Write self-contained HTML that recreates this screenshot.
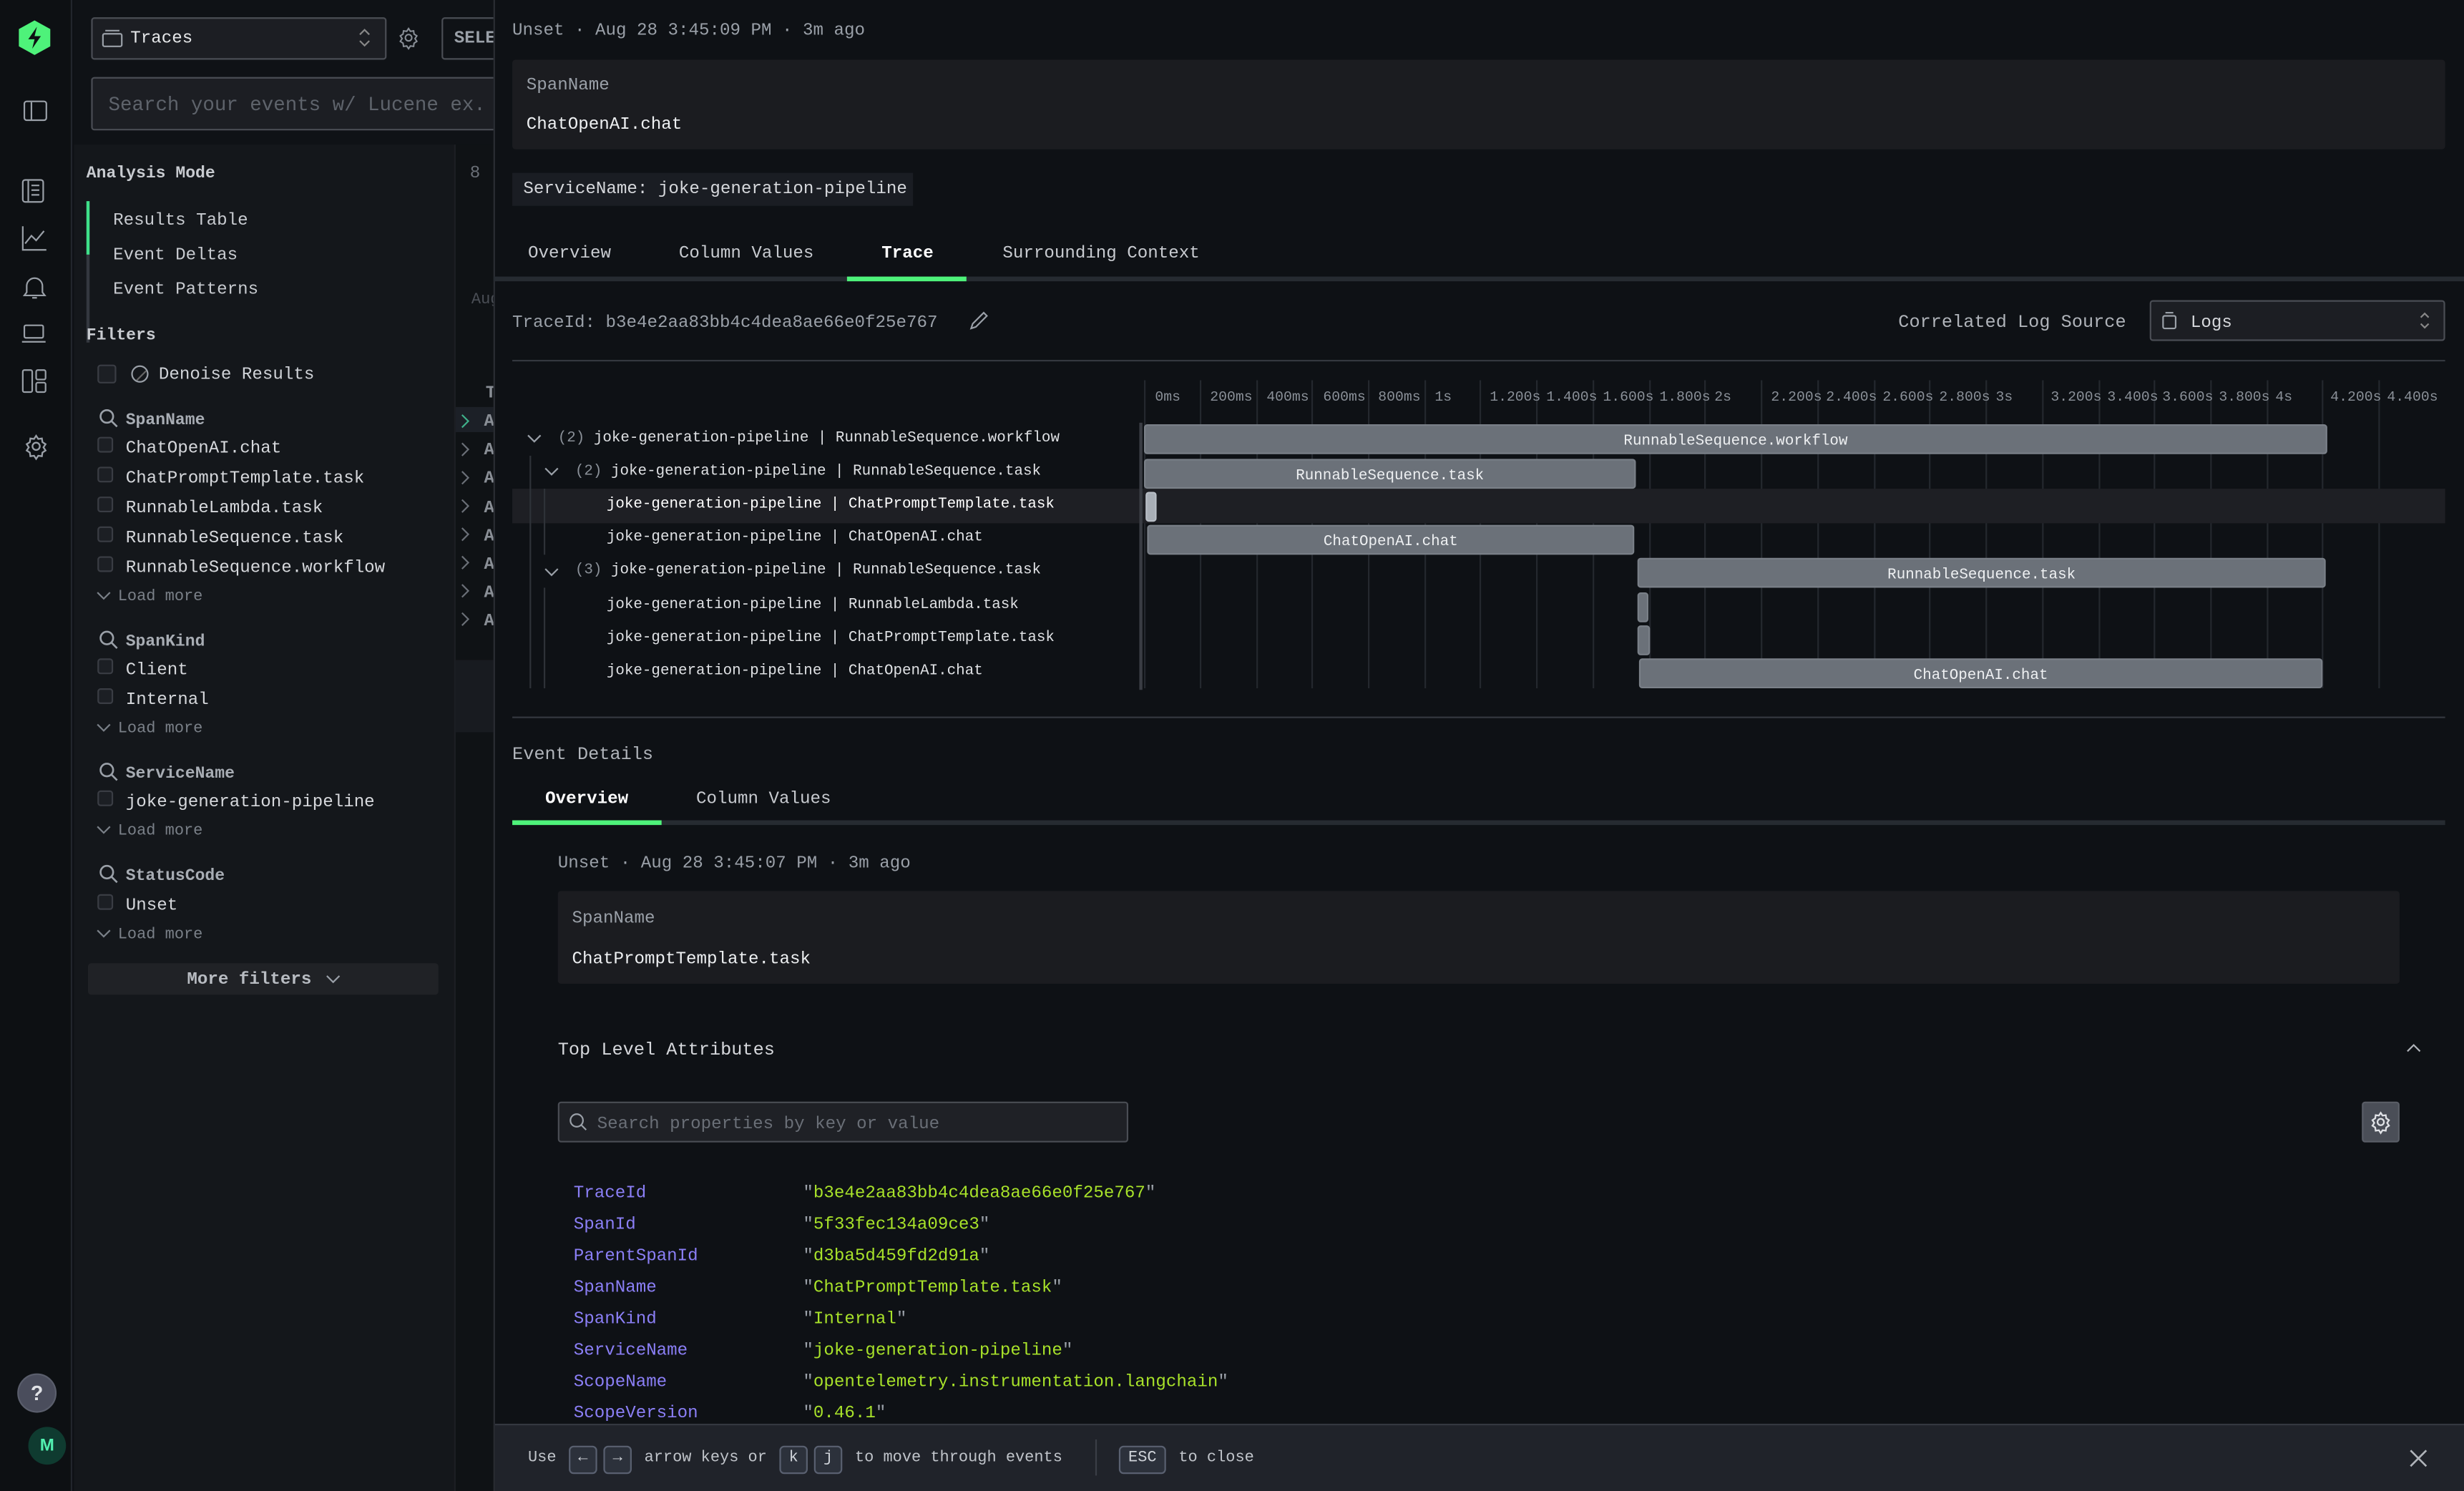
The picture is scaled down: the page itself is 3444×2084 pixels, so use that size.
<!DOCTYPE html>
<html><head><meta charset="utf-8">
<style>
*{margin:0;padding:0;box-sizing:border-box}
html,body{width:3444px;height:2083px;overflow:hidden;background:#0e1115}
#s{position:absolute;left:0;top:0;width:1568px;height:949px;transform:scale(2.19643);transform-origin:0 0;font-family:"Liberation Mono",monospace;color:#d6d8dc;background:#0e1115}
.a{position:absolute;white-space:nowrap;line-height:16px;margin-top:2px}
.t{font-size:11px}
.g{color:#9aa0a8}
.b{font-weight:bold}
svg{position:absolute;overflow:visible}
.cb{position:absolute;width:10px;height:10px;border:1px solid #3a3d44;background:#1c1f24;border-radius:2px}
.bar{position:absolute;height:19px;background:#6b7179;border-radius:2px;color:#eef0f2;font-size:9.5px;text-align:center;line-height:19px;border:1px solid #7a8088}
.tr{font-size:9.5px;color:#dfe1e4;margin-top:1px}
.tk{font-size:9px;color:#8a9098}
.k{color:#8b7ff6}
.v{color:#a8e22a}
.kbd{display:inline-block;border:1px solid #596070;background:#2c313b;border-radius:3px;padding:0 3px;height:18px;line-height:16px;min-width:18px;text-align:center;margin:0 2px;color:#d0d4da}
</style></head><body><div id="s">

<!-- nav -->
<div style="position:absolute;left:0;top:0;width:46px;height:949px;background:#0d1013;border-right:1px solid #22262c"></div>
<svg width="24" height="24" style="left:10px;top:12px" viewBox="0 0 24 24"><polygon points="12,1 22,6.5 22,17.5 12,23 2,17.5 2,6.5" fill="#4ef27a"/><path d="M13.5 5 L8 13 H12 L10.5 19 L16 11 H12 Z" fill="#0d1013"/></svg>
<svg width="16" height="14" style="left:15px;top:64px"><rect x="0.5" y="0.5" width="14" height="12" rx="1.5" fill="none" stroke="#9aa0a8"/><line x1="5" y1="1" x2="5" y2="12" stroke="#9aa0a8"/></svg>
<svg width="16" height="16" style="left:14px;top:114px"><rect x="0.5" y="0.5" width="13" height="14" rx="1.5" fill="none" stroke="#9aa0a8"/><line x1="4" y1="1" x2="4" y2="14" stroke="#9aa0a8"/><path d="M6 4h5M6 7h5M6 10h5" stroke="#9aa0a8"/></svg>
<svg width="16" height="16" style="left:14px;top:144px"><path d="M0.5 0v15h15M2 11l4-5 3 3 5-6" fill="none" stroke="#9aa0a8"/></svg>
<svg width="16" height="16" style="left:14px;top:175px"><path d="M3 11V7a5 5 0 0 1 10 0v4l1.5 2h-13z M6.5 14.5h3" fill="none" stroke="#9aa0a8"/></svg>
<svg width="16" height="14" style="left:14px;top:206px"><rect x="1.5" y="1" width="12" height="8" rx="1" fill="none" stroke="#9aa0a8"/><path d="M0 11.5h15" stroke="#9aa0a8"/></svg>
<svg width="16" height="16" style="left:14px;top:235px"><rect x="0.5" y="0.5" width="6" height="14" rx="1" fill="none" stroke="#9aa0a8"/><rect x="9" y="0.5" width="6" height="6" rx="1" fill="none" stroke="#9aa0a8"/><rect x="9" y="8.5" width="6" height="6" rx="1" fill="none" stroke="#9aa0a8"/></svg>
<svg width="16" height="16" style="left:15px;top:276px" viewBox="0 0 24 24"><path d="M12 2l2 3 3.5-.5.5 3.5 3 2-2 3 2 3-3 2-.5 3.5-3.5-.5-2 3-2-3-3.5.5-.5-3.5-3-2 2-3-2-3 3-2 .5-3.5 3.5.5z" fill="none" stroke="#9aa0a8" stroke-width="1.6"/><circle cx="12" cy="12" r="3.5" fill="none" stroke="#9aa0a8" stroke-width="1.6"/></svg>
<div style="position:absolute;left:11px;top:874px;width:25px;height:25px;border-radius:50%;background:#4a4d5c;border:1px solid #5a5e6c;color:#e0e2e6;font:bold 13px 'Liberation Sans',sans-serif;text-align:center;line-height:23px">?</div>
<div style="position:absolute;left:18px;top:908px;width:24px;height:24px;border-radius:50%;background:#0f3b30;color:#52f0b0;font:bold 11px 'Liberation Sans',sans-serif;text-align:center;line-height:24px">M</div>

<!-- sidebar -->
<div style="position:absolute;left:47px;top:0;width:267px;height:92px;background:#0f1216"></div>
<div style="position:absolute;left:47px;top:92px;width:243px;height:857px;background:#14171b;border-right:1px solid #1c1f24"></div>
<div style="position:absolute;left:290px;top:92px;width:24px;height:857px;background:#0f1215"></div>
<div style="position:absolute;left:58px;top:11px;width:188px;height:27px;border:1px solid #4a4d54;border-radius:2px;background:#1c1e23"></div>
<svg width="14" height="12" style="left:65px;top:18px"><rect x="0.5" y="3.5" width="12" height="8" rx="1" fill="none" stroke="#9aa0a8"/><path d="M2 1.5h9" stroke="#9aa0a8"/></svg>
<div class="a t" style="left:83px;top:15px;color:#e6e8ea">Traces</div>
<svg width="10" height="12" style="left:227px;top:18px"><path d="M2 4l3-3 3 3M2 8l3 3 3-3" fill="none" stroke="#888"/></svg>
<svg width="14" height="14" style="left:253px;top:17px" viewBox="0 0 24 24"><path d="M12 2l2 3 3.5-.5.5 3.5 3 2-2 3 2 3-3 2-.5 3.5-3.5-.5-2 3-2-3-3.5.5-.5-3.5-3-2 2-3-2-3 3-2 .5-3.5 3.5.5z" fill="none" stroke="#8a9098" stroke-width="1.6"/><circle cx="12" cy="12" r="3.5" fill="none" stroke="#8a9098" stroke-width="1.6"/></svg>
<div style="position:absolute;left:281px;top:11px;width:40px;height:27px;border:1px solid #4a4d54;border-radius:2px"></div>
<div class="a t b" style="left:289px;top:15px;color:#9aa0a8">SELE</div>
<div style="position:absolute;left:58px;top:49px;width:260px;height:34px;border:1px solid #4a4d54;border-radius:2px;background:#1c1e23"></div>
<div class="a" style="left:69px;top:57px;font-size:12.5px;color:#5e636b">Search your events w/ Lucene ex. co</div>

<div class="a t b" style="left:55px;top:101px;font-size:10.5px;color:#c8cbd0">Analysis Mode</div>
<div style="position:absolute;left:55px;top:128px;width:2px;height:90px;background:#34383f"></div>
<div style="position:absolute;left:55px;top:128px;width:2px;height:34px;background:#3ee08a"></div>
<div class="a t" style="left:72px;top:131px;color:#c8cbd0">Results Table</div>
<div class="a t" style="left:72px;top:153px;color:#c8cbd0">Event Deltas</div>
<div class="a t" style="left:72px;top:175px;color:#c8cbd0">Event Patterns</div>
<div class="a t b" style="left:55px;top:204px;font-size:10.5px;color:#c8cbd0">Filters</div>
<div class="cb" style="left:62px;top:232px;width:12px;height:12px"></div>
<svg width="12" height="12" style="left:83px;top:232px"><circle cx="6" cy="6" r="5" fill="none" stroke="#9aa0a8"/><path d="M4 10l6-6" stroke="#666"/></svg>
<div class="a t" style="left:101px;top:229px;color:#d0d3d8">Denoise Results</div>

<svg width="12" height="12" style="left:63px;top:260px"><circle cx="5" cy="5" r="4" fill="none" stroke="#9aa0a8" stroke-width="1.2"/><path d="M8 8l3.5 3.5" stroke="#9aa0a8" stroke-width="1.2"/></svg>
<div class="a b" style="left:80px;top:258px;font-size:10.5px;color:#a8adb4">SpanName</div>
<div class="cb" style="left:62px;top:278px"></div><div class="a t" style="left:80px;top:276px">ChatOpenAI.chat</div>
<div class="cb" style="left:62px;top:297px"></div><div class="a t" style="left:80px;top:295px">ChatPromptTemplate.task</div>
<div class="cb" style="left:62px;top:316px"></div><div class="a t" style="left:80px;top:314px">RunnableLambda.task</div>
<div class="cb" style="left:62px;top:335px"></div><div class="a t" style="left:80px;top:333px">RunnableSequence.task</div>
<div class="cb" style="left:62px;top:354px"></div><div class="a t" style="left:80px;top:352px">RunnableSequence.workflow</div>
<svg width="10" height="6" style="left:61px;top:376px"><path d="M1 1l4 4 4-4" fill="none" stroke="#7a8088"/></svg><div class="a" style="left:75px;top:371px;font-size:10px;color:#7a8088">Load more</div>

<svg width="12" height="12" style="left:63px;top:401px"><circle cx="5" cy="5" r="4" fill="none" stroke="#9aa0a8" stroke-width="1.2"/><path d="M8 8l3.5 3.5" stroke="#9aa0a8" stroke-width="1.2"/></svg>
<div class="a b" style="left:80px;top:399px;font-size:10.5px;color:#a8adb4">SpanKind</div>
<div class="cb" style="left:62px;top:419px"></div><div class="a t" style="left:80px;top:417px">Client</div>
<div class="cb" style="left:62px;top:438px"></div><div class="a t" style="left:80px;top:436px">Internal</div>
<svg width="10" height="6" style="left:61px;top:460px"><path d="M1 1l4 4 4-4" fill="none" stroke="#7a8088"/></svg><div class="a" style="left:75px;top:455px;font-size:10px;color:#7a8088">Load more</div>

<svg width="12" height="12" style="left:63px;top:485px"><circle cx="5" cy="5" r="4" fill="none" stroke="#9aa0a8" stroke-width="1.2"/><path d="M8 8l3.5 3.5" stroke="#9aa0a8" stroke-width="1.2"/></svg>
<div class="a b" style="left:80px;top:483px;font-size:10.5px;color:#a8adb4">ServiceName</div>
<div class="cb" style="left:62px;top:503px"></div><div class="a t" style="left:80px;top:501px">joke-generation-pipeline</div>
<svg width="10" height="6" style="left:61px;top:525px"><path d="M1 1l4 4 4-4" fill="none" stroke="#7a8088"/></svg><div class="a" style="left:75px;top:520px;font-size:10px;color:#7a8088">Load more</div>

<svg width="12" height="12" style="left:63px;top:550px"><circle cx="5" cy="5" r="4" fill="none" stroke="#9aa0a8" stroke-width="1.2"/><path d="M8 8l3.5 3.5" stroke="#9aa0a8" stroke-width="1.2"/></svg>
<div class="a b" style="left:80px;top:548px;font-size:10.5px;color:#a8adb4">StatusCode</div>
<div class="cb" style="left:62px;top:569px"></div><div class="a t" style="left:80px;top:567px">Unset</div>
<svg width="10" height="6" style="left:61px;top:591px"><path d="M1 1l4 4 4-4" fill="none" stroke="#7a8088"/></svg><div class="a" style="left:75px;top:586px;font-size:10px;color:#7a8088">Load more</div>
<div style="position:absolute;left:56px;top:613px;width:223px;height:20px;background:#202226;border-radius:2px"></div>
<div class="a t b" style="left:119px;top:614px;color:#b8bcc2">More filters</div>
<svg width="10" height="6" style="left:207px;top:620px"><path d="M1 1l4 4 4-4" fill="none" stroke="#9aa0a8"/></svg>

<!-- peeking results column -->
<div class="a t" style="left:299px;top:101px;color:#6a6f77">8</div>
<div class="a" style="left:300px;top:182px;font-size:10px;color:#4a4e55">Aug</div>
<div class="a t b" style="left:309px;top:241px;color:#8a8f96">T</div>
<div style="position:absolute;left:290px;top:259px;width:24px;height:16px;background:#1c2027"></div>
<svg width="6" height="120" style="left:293px;top:263px"><path d="M1 1l4 4-4 4" fill="none" stroke="#3fb08a"/><g fill="none" stroke="#6a6f77"><path d="M1 19l4 4-4 4M1 37l4 4-4 4M1 55l4 4-4 4M1 73l4 4-4 4M1 91l4 4-4 4M1 109l4 4-4 4M1 127l4 4-4 4"/></g></svg>
<div class="a t b" style="left:308px;top:258px;color:#8a8f96;line-height:18.2px">A<br>A<br>A<br>A<br>A<br>A<br>A<br>A</div>
<div style="position:absolute;left:290px;top:420px;width:24px;height:46px;background:#181b20"></div>

<!-- drawer -->
<div style="position:absolute;left:314px;top:0;width:1254px;height:949px;background:#0e1115;border-left:1px solid #2a2d33"></div>
<div class="a t g" style="left:326px;top:10px">Unset · Aug 28 3:45:09 PM · 3m ago</div>
<div style="position:absolute;left:326px;top:38px;width:1230px;height:57px;background:#1b1c20;border-radius:2px"></div>
<div class="a t g" style="left:335px;top:45px">SpanName</div>
<div class="a t" style="left:335px;top:70px;color:#eef0f2">ChatOpenAI.chat</div>
<div style="position:absolute;left:326px;top:110px;width:255px;height:21px;background:#1a1d23"></div>
<div class="a t" style="left:333px;top:111px;color:#d6d8dc">ServiceName: joke-generation-pipeline</div>
<div class="a t" style="left:336px;top:152px;color:#c8cbd0">Overview</div>
<div class="a t" style="left:432px;top:152px;color:#c8cbd0">Column Values</div>
<div class="a t b" style="left:561px;top:152px;color:#fff">Trace</div>
<div class="a t" style="left:638px;top:152px;color:#c8cbd0">Surrounding Context</div>
<div style="position:absolute;left:314px;top:176px;width:1254px;height:3px;background:#262b31"></div>
<div style="position:absolute;left:539px;top:176px;width:76px;height:3px;background:#4ef27a"></div>

<div class="a t g" style="left:326px;top:196px">TraceId: b3e4e2aa83bb4c4dea8ae66e0f25e767</div>
<svg width="12" height="12" style="left:617px;top:198px"><path d="M1 11l1-3 7-7 2 2-7 7z" fill="none" stroke="#9aa0a8"/></svg>
<div class="a" style="left:1208px;top:196px;font-size:11.5px;color:#b0b4ba">Correlated Log Source</div>
<div style="position:absolute;left:1368px;top:191px;width:188px;height:26px;border:1px solid #4a4d54;border-radius:2px;background:#1c1e23"></div>
<svg width="10" height="12" style="left:1376px;top:198px"><rect x="0.5" y="3" width="8" height="8" rx="1" fill="none" stroke="#9aa0a8"/><path d="M2 1h5" stroke="#9aa0a8"/></svg>
<div class="a t" style="left:1394px;top:196px;color:#d6d8dc">Logs</div>
<svg width="8" height="12" style="left:1539px;top:198px"><path d="M1.5 4l2.5-2.5 2.5 2.5M1.5 8l2.5 2.5 2.5-2.5" fill="none" stroke="#888"/></svg>
<div style="position:absolute;left:326px;top:229px;width:1230px;height:1px;background:#34383f"></div>

<!-- timeline -->
<svg width="840" height="200" style="left:728px;top:242px">
<g stroke="#24282e" stroke-width="1">
<line x1="0.5" y1="0" x2="0.5" y2="196"/><line x1="36" y1="0" x2="36" y2="196"/><line x1="72" y1="0" x2="72" y2="196"/><line x1="107" y1="0" x2="107" y2="196"/><line x1="143" y1="0" x2="143" y2="196"/><line x1="179" y1="0" x2="179" y2="196"/><line x1="214" y1="0" x2="214" y2="196"/><line x1="250" y1="0" x2="250" y2="196"/><line x1="286" y1="0" x2="286" y2="196"/><line x1="322" y1="0" x2="322" y2="196"/><line x1="357" y1="0" x2="357" y2="196"/><line x1="393" y1="0" x2="393" y2="196"/><line x1="429" y1="0" x2="429" y2="196"/><line x1="465" y1="0" x2="465" y2="196"/><line x1="500" y1="0" x2="500" y2="196"/><line x1="536" y1="0" x2="536" y2="196"/><line x1="572" y1="0" x2="572" y2="196"/><line x1="608" y1="0" x2="608" y2="196"/><line x1="643" y1="0" x2="643" y2="196"/><line x1="679" y1="0" x2="679" y2="196"/><line x1="715" y1="0" x2="715" y2="196"/><line x1="750" y1="0" x2="750" y2="196"/><line x1="786" y1="0" x2="786" y2="196"/>
</g></svg>
<div class="a tk" style="left:735px;top:243px">0ms</div>
<div class="a tk" style="left:770px;top:243px">200ms</div>
<div class="a tk" style="left:806px;top:243px">400ms</div>
<div class="a tk" style="left:842px;top:243px">600ms</div>
<div class="a tk" style="left:877px;top:243px">800ms</div>
<div class="a tk" style="left:913px;top:243px">1s</div>
<div class="a tk" style="left:948px;top:243px">1.200s</div>
<div class="a tk" style="left:984px;top:243px">1.400s</div>
<div class="a tk" style="left:1020px;top:243px">1.600s</div>
<div class="a tk" style="left:1056px;top:243px">1.800s</div>
<div class="a tk" style="left:1091px;top:243px">2s</div>
<div class="a tk" style="left:1127px;top:243px">2.200s</div>
<div class="a tk" style="left:1162px;top:243px">2.400s</div>
<div class="a tk" style="left:1198px;top:243px">2.600s</div>
<div class="a tk" style="left:1234px;top:243px">2.800s</div>
<div class="a tk" style="left:1270px;top:243px">3s</div>
<div class="a tk" style="left:1305px;top:243px">3.200s</div>
<div class="a tk" style="left:1341px;top:243px">3.400s</div>
<div class="a tk" style="left:1376px;top:243px">3.600s</div>
<div class="a tk" style="left:1412px;top:243px">3.800s</div>
<div class="a tk" style="left:1448px;top:243px">4s</div>
<div class="a tk" style="left:1483px;top:243px">4.200s</div>
<div class="a tk" style="left:1519px;top:243px">4.400s</div>

<div style="position:absolute;left:326px;top:311px;width:1230px;height:22px;background:#1e1f24"></div>
<div style="position:absolute;left:725px;top:269px;width:2px;height:170px;background:#3a3d44"></div>
<div style="position:absolute;left:337px;top:290px;width:1px;height:148px;background:#2e3238"></div>
<div style="position:absolute;left:346px;top:311px;width:1px;height:42px;background:#2e3238"></div>
<div style="position:absolute;left:346px;top:374px;width:1px;height:64px;background:#2e3238"></div>

<svg width="10" height="6" style="left:335px;top:276px"><path d="M1 1l4 4 4-4" fill="none" stroke="#9aa0a8"/></svg>
<div class="a tr" style="left:355px;top:270px"><span style="color:#8a9098">(2)</span> joke-generation-pipeline | RunnableSequence.workflow</div>
<svg width="10" height="6" style="left:346px;top:297px"><path d="M1 1l4 4 4-4" fill="none" stroke="#9aa0a8"/></svg>
<div class="a tr" style="left:366px;top:291px"><span style="color:#8a9098">(2)</span> joke-generation-pipeline | RunnableSequence.task</div>
<div class="a tr" style="left:386px;top:312px;color:#fff">joke-generation-pipeline | ChatPromptTemplate.task</div>
<div class="a tr" style="left:386px;top:333px">joke-generation-pipeline | ChatOpenAI.chat</div>
<svg width="10" height="6" style="left:346px;top:361px"><path d="M1 1l4 4 4-4" fill="none" stroke="#9aa0a8"/></svg>
<div class="a tr" style="left:366px;top:354px"><span style="color:#8a9098">(3)</span> joke-generation-pipeline | RunnableSequence.task</div>
<div class="a tr" style="left:386px;top:376px">joke-generation-pipeline | RunnableLambda.task</div>
<div class="a tr" style="left:386px;top:397px">joke-generation-pipeline | ChatPromptTemplate.task</div>
<div class="a tr" style="left:386px;top:418px">joke-generation-pipeline | ChatOpenAI.chat</div>

<div class="bar" style="left:728px;top:270px;width:753px">RunnableSequence.workflow</div>
<div class="bar" style="left:728px;top:292px;width:313px">RunnableSequence.task</div>
<div class="bar" style="left:729px;top:313px;width:7px;background:#a8aeb6;border-color:#b8bec6"></div>
<div class="bar" style="left:730px;top:334px;width:310px">ChatOpenAI.chat</div>
<div class="bar" style="left:1042px;top:355px;width:438px">RunnableSequence.task</div>
<div class="bar" style="left:1042px;top:377px;width:7px"></div>
<div class="bar" style="left:1042px;top:398px;width:8px"></div>
<div class="bar" style="left:1043px;top:419px;width:435px">ChatOpenAI.chat</div>

<div style="position:absolute;left:326px;top:456px;width:1230px;height:1px;background:#34383f"></div>
<div class="a" style="left:326px;top:471px;font-size:11.5px;color:#b0b4ba">Event Details</div>
<div class="a t b" style="left:347px;top:499px;color:#fff">Overview</div>
<div class="a t" style="left:443px;top:499px;color:#c8cbd0">Column Values</div>
<div style="position:absolute;left:326px;top:522px;width:1230px;height:3px;background:#262b31"></div>
<div style="position:absolute;left:326px;top:522px;width:95px;height:3px;background:#4ef27a"></div>

<div class="a t g" style="left:355px;top:540px">Unset · Aug 28 3:45:07 PM · 3m ago</div>
<div style="position:absolute;left:355px;top:567px;width:1172px;height:59px;background:#1b1c20;border-radius:2px"></div>
<div class="a t g" style="left:364px;top:575px">SpanName</div>
<div class="a t" style="left:364px;top:601px;color:#eef0f2">ChatPromptTemplate.task</div>
<div class="a" style="left:355px;top:659px;font-size:11.5px;color:#d6d8dc">Top Level Attributes</div>
<svg width="10" height="6" style="left:1531px;top:664px"><path d="M1 5l4-4 4 4" fill="none" stroke="#b0b4ba"/></svg>
<div style="position:absolute;left:355px;top:701px;width:363px;height:26px;border:1px solid #4a4d54;border-radius:2px;background:#1f2126"></div>
<svg width="12" height="12" style="left:362px;top:708px"><circle cx="5" cy="5" r="4" fill="none" stroke="#9aa0a8"/><path d="M8 8l3 3" stroke="#9aa0a8"/></svg>
<div class="a t" style="left:380px;top:706px;color:#6a6f77">Search properties by key or value</div>
<div style="position:absolute;left:1503px;top:701px;width:24px;height:26px;background:#4a4e57;border-radius:2px;border:1px solid #5a5e67"></div>
<svg width="14" height="14" style="left:1508px;top:707px" viewBox="0 0 24 24"><path d="M12 2l2 3 3.5-.5.5 3.5 3 2-2 3 2 3-3 2-.5 3.5-3.5-.5-2 3-2-3-3.5.5-.5-3.5-3-2 2-3-2-3 3-2 .5-3.5 3.5.5z" fill="none" stroke="#e0e2e6" stroke-width="1.8"/><circle cx="12" cy="12" r="3.5" fill="none" stroke="#e0e2e6" stroke-width="1.8"/></svg>

<div class="a t k" style="left:365px;top:750px;line-height:20px;margin-top:0">TraceId<br>SpanId<br>ParentSpanId<br>SpanName<br>SpanKind<br>ServiceName<br>ScopeName<br>ScopeVersion</div>
<div class="a t v" style="left:511px;top:750px;line-height:20px;margin-top:0"><span class="g">"</span>b3e4e2aa83bb4c4dea8ae66e0f25e767<span class="g">"</span><br><span class="g">"</span>5f33fec134a09ce3<span class="g">"</span><br><span class="g">"</span>d3ba5d459fd2d91a<span class="g">"</span><br><span class="g">"</span>ChatPromptTemplate.task<span class="g">"</span><br><span class="g">"</span>Internal<span class="g">"</span><br><span class="g">"</span>joke-generation-pipeline<span class="g">"</span><br><span class="g">"</span>opentelemetry.instrumentation.langchain<span class="g">"</span><br><span class="g">"</span>0.46.1<span class="g">"</span></div>

<!-- bottom bar -->
<div style="position:absolute;left:315px;top:906px;width:1253px;height:43px;background:#20232a;border-top:1px solid #343840"></div>
<div class="a" style="left:336px;top:918px;font-size:10px;color:#c0c4ca;line-height:18px">Use <span class="kbd">←</span><span class="kbd">→</span> arrow keys or <span class="kbd">k</span><span class="kbd">j</span> to move through events</div>
<div style="position:absolute;left:697px;top:916px;width:1px;height:23px;background:#3a3e46"></div>
<div class="a" style="left:710px;top:918px;font-size:10px;color:#c0c4ca;line-height:18px"><span class="kbd" style="padding:0 5px">ESC</span> to close</div>
<svg width="12" height="12" style="left:1533px;top:922px"><path d="M1 1l10 10M11 1L1 11" stroke="#b0b4ba" stroke-width="1.2"/></svg>

</div></body></html>
